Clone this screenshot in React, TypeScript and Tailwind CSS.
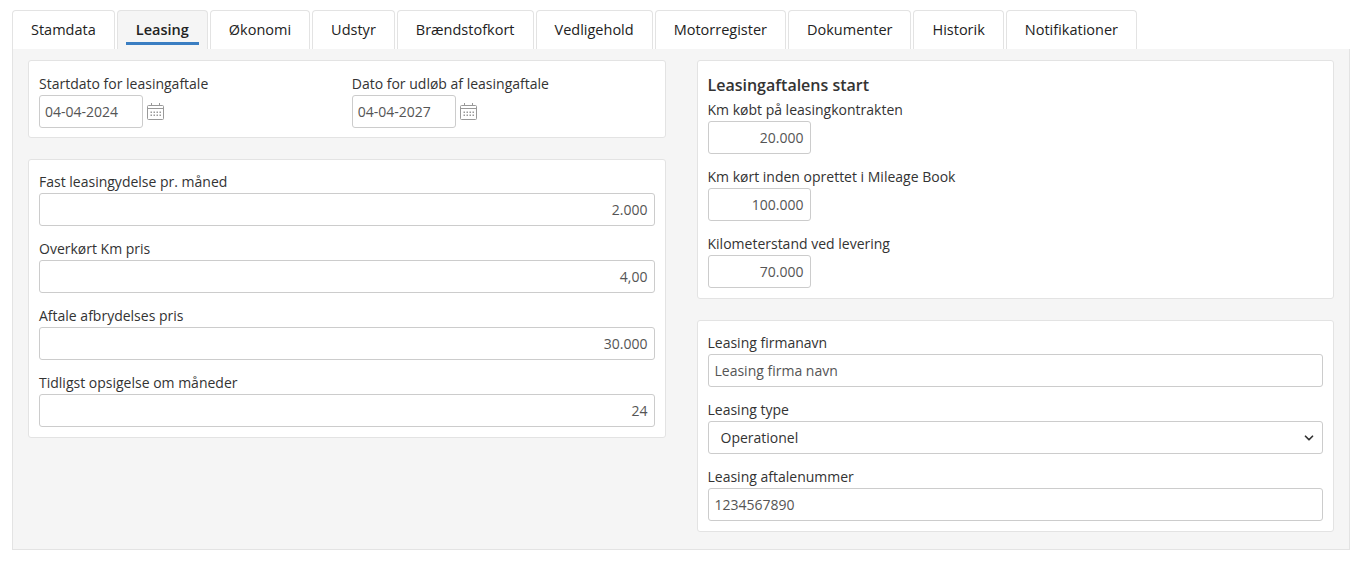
import { ChevronDown } from 'lucide-react';

const tabs = ['Stamdata', 'Leasing', 'Økonomi', 'Udstyr', 'Brændstofkort', 'Vedligehold', 'Motorregister', 'Dokumenter', 'Historik', 'Notifikationer'];

const Calendar = () => (
  <svg width="19" height="19" viewBox="0 0 19 19" className="ml-[3px]">
    <rect x="1.5" y="3.5" width="16" height="14" rx="1" fill="none" stroke="#999" />
    <line x1="1.5" y1="6.5" x2="17.5" y2="6.5" stroke="#999" />
    <line x1="5.5" y1="1" x2="5.5" y2="4" stroke="#999" />
    <line x1="13.5" y1="1" x2="13.5" y2="4" stroke="#999" />
    {[5, 8, 11, 14].map((x) => [10, 13].map((y) => <rect key={`${x}-${y}`} x={x - 0.5} y={y - 0.5} width="1.5" height="1.5" fill="#999" />))}
  </svg>
);

const Field = ({ label, value, align = 'right', width = 'w-full' }: { label: string; value: string; align?: 'right' | 'left'; width?: string }) => (
  <div className="flex flex-col">
    <label className="text-[14px] text-[#333] leading-[20px] mb-[1px]">{label}</label>
    <div className={`${width} h-[33px] border border-[#ccc] rounded-[3px] bg-white flex items-center px-[6px] text-[14px] text-[#555] ${align === 'right' ? 'justify-end' : ''}`}>
      {value}
    </div>
  </div>
);

export default function App() {
  return (
    <div className="bg-white min-h-[564px] pt-[10px] px-[12px]" style={{ fontFamily: '"Open Sans", sans-serif' }}>
      <div className="flex gap-[2px] h-[39px]">
        {tabs.map((t) => (
          <div
            key={t}
            className={`px-[18px] border border-b-0 border-[#e3e3e3] rounded-t-[4px] flex items-center text-[14.5px] text-[#222] ${t === 'Leasing' ? 'bg-[#f5f5f5] font-semibold' : 'bg-white'}`}
          >
            <span className={t === 'Leasing' ? 'border-b-[3px] border-[#3a7ec2] pb-[1px] px-[10px] -mx-[10px] mt-[4px]' : ''}>{t}</span>
          </div>
        ))}
      </div>
      <div className="bg-[#f5f5f5] border border-[#e3e3e3] border-t-0 h-[501px] px-[15px] pt-[11px] grid grid-cols-2 gap-[31px] items-start">
        <div className="flex flex-col gap-[21px]">
          <div className="bg-white border border-[#e3e3e3] rounded-[3px] px-[10px] pt-[13px] pb-[9px] grid grid-cols-2 gap-[10px]">
            {[['Startdato for leasingaftale', '04-04-2024'], ['Dato for udløb af leasingaftale', '04-04-2027']].map(([l, v]) => (
              <div key={l}>
                <div className="text-[14px] text-[#333] leading-[20px] mb-[1px]">{l}</div>
                <div className="flex items-center">
                  <div className="w-[104px] h-[33px] border border-[#ccc] rounded-[3px] flex items-center px-[5px] text-[14px] text-[#555]">{v}</div>
                  <Calendar />
                </div>
              </div>
            ))}
          </div>
          <div className="bg-white border border-[#e3e3e3] rounded-[3px] px-[10px] pt-[12px] pb-[10px] flex flex-col gap-[13px]">
            <Field label="Fast leasingydelse pr. måned" value="2.000" />
            <Field label="Overkørt Km pris" value="4,00" />
            <Field label="Aftale afbrydelses pris" value="30.000" />
            <Field label="Tidligst opsigelse om måneder" value="24" />
          </div>
        </div>
        <div className="flex flex-col gap-[21px]">
          <div className="bg-white border border-[#e3e3e3] rounded-[3px] px-[10px] pt-[12px] pb-[10px] flex flex-col gap-[13px]">
            <div className="text-[16px] font-semibold text-[#333] leading-[24px] -mb-[10px]">Leasingaftalens start</div>
            <Field label="Km købt på leasingkontrakten" value="20.000" width="w-[103px]" />
            <Field label="Km kørt inden oprettet i Mileage Book" value="100.000" width="w-[103px]" />
            <Field label="Kilometerstand ved levering" value="70.000" width="w-[103px]" />
          </div>
          <div className="bg-white border border-[#e3e3e3] rounded-[3px] px-[10px] pt-[12px] pb-[10px] flex flex-col gap-[13px]">
            <Field label="Leasing firmanavn" value="Leasing firma navn" align="left" />
            <div className="flex flex-col">
              <label className="text-[14px] text-[#333] leading-[20px] mb-[1px]">Leasing type</label>
              <div className="h-[33px] border border-[#ccc] rounded-[3px] bg-white flex items-center justify-between pl-[12px] pr-[6px] text-[14px] text-[#333]">
                Operationel
                <ChevronDown size={14} strokeWidth={3} color="#333" />
              </div>
            </div>
            <Field label="Leasing aftalenummer" value="1234567890" align="left" />
          </div>
        </div>
      </div>
    </div>
  );
}
